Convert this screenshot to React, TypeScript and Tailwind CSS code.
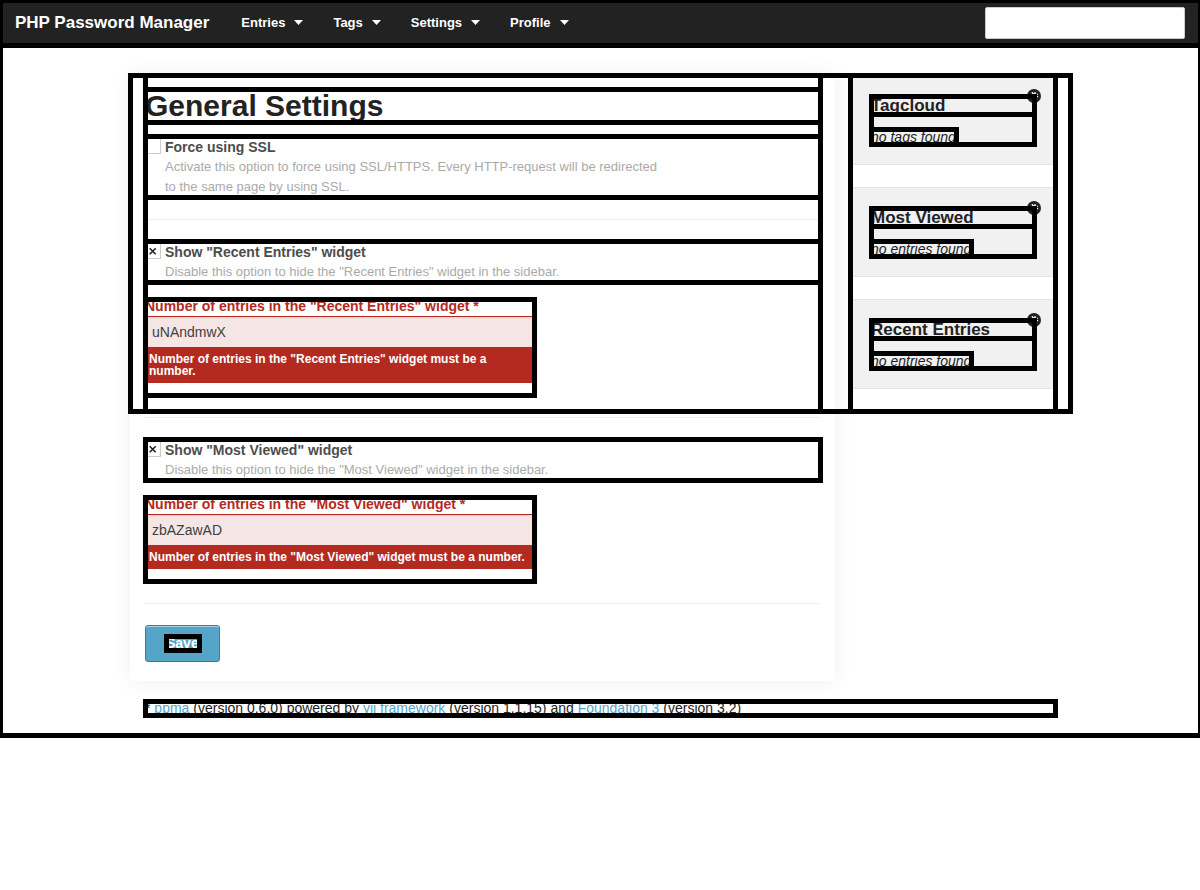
import type { ReactNode } from "react";

const frame =
  "relative after:pointer-events-none after:absolute after:-top-0.5 after:-left-0.5 after:-right-[3px] after:-bottom-[3px] after:border-[5px] after:border-black after:content-['']";

function Caret() {
  return (
    <svg width="9" height="5" viewBox="0 0 9 5" fill="white" aria-hidden="true">
      <path d="M0 0h9L4.500 5z" />
    </svg>
  );
}

function Option({ id, label, checked, children }: { id: string; label: string; checked?: boolean; children: ReactNode }) {
  return (
    <div className={`${frame} flex gap-1`}>
      <span className="relative mt-0.5 block size-4 shrink-0">
        <input
          id={id}
          type="checkbox"
          defaultChecked={checked}
          className="peer block size-4 appearance-none border border-[#ccc] bg-white"
        />
        <svg
          className="pointer-events-none absolute inset-0 hidden peer-checked:block"
          viewBox="0 0 16 16"
          stroke="#222"
          strokeWidth="1.6"
          aria-hidden="true"
        >
          <path d="M4.700 5.200l6 6M10.700 5.200l-6 6" />
        </svg>
      </span>
      <div>
        <label htmlFor={id} className="block h-[21px] text-[14px] leading-[23px] font-bold text-[#4d4d4d]">
          {label}
        </label>
        <p className="text-[13px] leading-5 text-[#aaa]">{children}</p>
      </div>
    </div>
  );
}

function ErrorField({ id, name, value }: { id: string; name: string; value: string }) {
  return (
    <div className={`${frame} mt-[17px] w-[389px] max-w-full pb-3`}>
      <label htmlFor={id} className="block h-[17px] text-[14px] leading-[15px] font-bold text-[#b42a21]">
        {name} *
      </label>
      <input
        id={id}
        type="text"
        defaultValue={value}
        aria-invalid="true"
        className="block h-[31px] w-full border border-b-0 border-[#b42a21] bg-[#f5e6e5] px-1.5 text-[14px] text-[#404040] shadow-[inset_0_1px_2px_rgba(0,0,0,0.1)] outline-none"
      />
      <small className="block bg-[#b42a21] px-1 py-1.5 text-[12px] leading-3 font-bold text-white">
        {name} must be a number.
      </small>
    </div>
  );
}

function Rule() {
  return <hr className="mt-[22px] mb-[21px] border-t border-[#eee]" />;
}

function Widget({ title, note }: { title: string; note: string }) {
  return (
    <section className="mb-[22px] border border-[#e3e3e3] bg-[#f1f1f1] p-5">
      <div className={`${frame} h-12`}>
        <svg className="absolute -top-[7px] -right-[7px]" width="14" height="14" viewBox="0 0 14 14" aria-hidden="true">
          <circle cx="7" cy="7" r="7" fill="#222" />
          <circle cx="7" cy="7" r="2.400" fill="none" stroke="white" strokeWidth="1.200" />
          <circle cx="7" cy="7" r="3.500" fill="none" stroke="white" strokeWidth="1.200" strokeDasharray="1.375 1.375" />
        </svg>
        <h2 className={`${frame} h-[18px] text-[17px] leading-5 font-bold text-[#222]`}>{title}</h2>
        <em className={`${frame} mt-[15px] block h-[15px] w-fit text-[14px] leading-[17px] text-[#222]`}>{note}</em>
      </div>
    </section>
  );
}

export default function App() {
  return (
    <div className="overflow-x-clip bg-white pb-1 font-['Liberation_Sans',Arial,sans-serif] text-[#222]">
      <div className={`${frame} pb-5`}>
        <header className={`${frame} flex h-[45px] items-center bg-[#222] px-[15px] text-white`}>
          <a href="#home" className="text-[17px] font-bold">
            PHP Password Manager
          </a>
          <nav className="ml-8 flex gap-[30px] text-[13px] font-bold">
            {["Entries", "Tags", "Settings", "Profile"].map((item) => (
              <button key={item} type="button" className="flex items-center gap-[9px]">
                {item}
                <Caret />
              </button>
            ))}
          </nav>
          <input
            type="search"
            aria-label="Search"
            className="ml-auto h-8 w-[200px] rounded-[2px] border border-[#ccc] bg-white px-2 text-[14px] text-[#222]"
          />
        </header>

        <div className="relative mx-auto mt-[30px] flex max-w-[940px] items-start">
          <main className="min-w-0 flex-1 rounded-[3px] bg-white px-[15px] pt-3.5 pb-[19px] shadow-[0_0_20px_rgba(0,0,0,0.07)]">
            <h1 className={`${frame} mb-3.5 text-[30px] leading-[33px] font-bold`}>General Settings</h1>
            <form>
              <Option id="ssl" label="Force using SSL">
                Activate this option to force using SSL/HTTPS. Every HTTP-request will be redirected
                <br />
                to the same page by using SSL.
              </Option>
              <Rule />
              <Option id="recent" label={'Show "Recent Entries" widget'} checked>
                Disable this option to hide the "Recent Entries" widget in the sidebar.
              </Option>
              <ErrorField id="recent-count" name={'Number of entries in the "Recent Entries" widget'} value="uNAndmwX" />
              <Rule />
              <Option id="viewed" label={'Show "Most Viewed" widget'} checked>
                Disable this option to hide the "Most Viewed" widget in the sidebar.
              </Option>
              <ErrorField id="viewed-count" name={'Number of entries in the "Most Viewed" widget'} value="zbAZawAD" />
              <Rule />
              <button
                type="submit"
                className="block rounded-[3px] border border-[#3c7d99] bg-[#55a5c8] px-5 pt-2.5 pb-[11px] text-[14px] leading-[14px] font-bold text-white shadow-[inset_0_1px_0_rgba(255,255,255,0.5)]"
              >
                <span className={`${frame} block`}>Save</span>
              </button>
            </form>
          </main>
          <aside className={`${frame} mr-[15px] ml-[15px] w-[205px] shrink-0`}>
            <Widget title="Tagcloud" note="no tags found" />
            <Widget title="Most Viewed" note="no entries found" />
            <Widget title="Recent Entries" note="no entries found" />
          </aside>
          {/* Row outline with the content column outlined inside it */}
          <div className="pointer-events-none absolute -top-0.5 -right-[3px] -left-0.5 h-[341px] border-[5px] border-black" />
          <div className="pointer-events-none absolute -top-0.5 right-[247px] left-[13px] h-[341px] border-[5px] border-black" />
        </div>

        <div className="mx-auto mt-5 max-w-[940px] px-[15px]">
          <footer className={`${frame} text-[14px] leading-[14px]`}>
            * <a href="#ppma" className="text-[#55a5c8]">ppma</a> (version 0.6.0) powered by{" "}
            <a href="#yii" className="text-[#55a5c8]">yii framework</a> (version 1.1.15) and{" "}
            <a href="#foundation" className="text-[#55a5c8]">Foundation 3</a> (version 3.2)
          </footer>
        </div>
      </div>
    </div>
  );
}
